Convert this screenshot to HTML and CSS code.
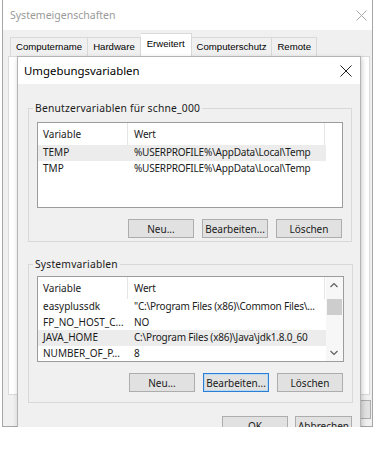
FILE: index.html
```html
<!DOCTYPE html>
<html lang="de">
<head>
  <meta charset="UTF-8">
  <title>Systemeigenschaften</title>
  <link rel="stylesheet" href="styles.css">
</head>
<body>
<div class="sys">
  <div class="sys-title">
    <span>Systemeigenschaften</span>
    <svg class="sys-close" width="11" height="11" viewBox="0 0 11 11"><path d="M0.5 0.5 L10.5 10.5 M10.5 0.5 L0.5 10.5" stroke="#a8a8a8" stroke-width="1" fill="none"/></svg>
  </div>
  <div class="tabs">
    <div class="tab">Computername</div>
    <div class="tab">Hardware</div>
    <div class="tab tab-active">Erweitert</div>
    <div class="tab">Computerschutz</div>
    <div class="tab">Remote</div>
  </div>
  <div class="page"></div>
  <div class="sys-footer">
    <button class="btn btn-apply">Übernehmen</button>
  </div>

  <div class="dialog">
    <div class="dialog-title">
      <span>Umgebungsvariablen</span>
      <svg class="dialog-close" width="12" height="12" viewBox="0 0 12 12"><path d="M0.5 0.5 L11.5 11.5 M11.5 0.5 L0.5 11.5" stroke="#222" stroke-width="1" fill="none"/></svg>
    </div>
    <div class="dialog-body">
      <fieldset class="group group-user">
        <legend>Benutzervariablen für schne_000</legend>
        <div class="list">
          <div class="list-main">
            <div class="list-head">
              <div class="col">Variable</div>
              <div class="col">Wert</div>
            </div>
            <div class="row row-sel"><div class="col">TEMP</div><div class="col">%USERPROFILE%\AppData\Local\Temp</div></div>
            <div class="row"><div class="col">TMP</div><div class="col">%USERPROFILE%\AppData\Local\Temp</div></div>
          </div>
        </div>
        <div class="btn-row">
          <button class="btn">Neu...</button>
          <button class="btn">Bearbeiten...</button>
          <button class="btn">Löschen</button>
        </div>
      </fieldset>

      <fieldset class="group group-sys">
        <legend>Systemvariablen</legend>
        <div class="list">
          <div class="list-main">
            <div class="list-head">
              <div class="col">Variable</div>
              <div class="col">Wert</div>
            </div>
            <div class="row"><div class="col">easyplussdk</div><div class="col">"C:\Program Files (x86)\Common Files\...</div></div>
            <div class="row"><div class="col">FP_NO_HOST_C...</div><div class="col">NO</div></div>
            <div class="row row-sel"><div class="col">JAVA_HOME</div><div class="col">C:\Program Files (x86)\Java\jdk1.8.0_60</div></div>
            <div class="row"><div class="col">NUMBER_OF_P...</div><div class="col">8</div></div>
          </div>
          <div class="scrollbar">
            <svg class="arrow" width="16" height="17" viewBox="0 0 16 17"><path d="M4.5 10 L8 6.5 L11.5 10" stroke="#606060" stroke-width="1.2" fill="none"/></svg>
            <div class="track"><div class="thumb"></div></div>
            <svg class="arrow" width="16" height="17" viewBox="0 0 16 17"><path d="M4.5 7 L8 10.5 L11.5 7" stroke="#606060" stroke-width="1.2" fill="none"/></svg>
          </div>
        </div>
        <div class="btn-row">
          <button class="btn">Neu...</button>
          <button class="btn btn-focus">Bearbeiten...</button>
          <button class="btn">Löschen</button>
        </div>
      </fieldset>

      <div class="dialog-footer">
        <button class="btn">OK</button>
        <button class="btn">Abbrechen</button>
      </div>
    </div>
  </div>
</div>
</body>
</html>
```

FILE: styles.css
```css
* {
  margin: 0;
  padding: 0;
  box-sizing: border-box;
}

body {
  background: #fff;
  font-family: "Noto Sans", sans-serif;
  font-size: 10px;
  color: #1a1a1a;
}

.sys {
  position: relative;
  width: 371px;
  height: 427px;
  margin-left: 2px;
  border: 1px solid #a6a6a6;
  border-top: 0;
  background: #f0f0f0;
}

.sys-title {
  height: 30px;
  background: #fff;
  display: flex;
  align-items: center;
  justify-content: space-between;
  padding: 0 5px 0 7px;
  font-size: 10.5px;
  color: #9a9a9a;
}

.tabs {
  display: flex;
  align-items: flex-end;
  height: 26px;
  padding-left: 7px;
  position: relative;
  z-index: 1;
}

.tab {
  height: 19px;
  padding: 0 5px;
  border: 1px solid #d9d9d9;
  border-bottom: 0;
  border-left: 0;
  background: #f0f0f0;
  font-family: "Liberation Sans", Arial, sans-serif;
  font-size: 9.6px;
  line-height: 18px;
  color: #000;
}

.tab:first-child {
  border-left: 1px solid #d9d9d9;
}

.tab-active {
  height: 24px;
  background: #fff;
  margin-bottom: -1px;
  line-height: 20px;
  padding: 0 6px;
}

.page {
  height: 339px;
  margin: 0 2px 0 5px;
  border: 1px solid #d9d9d9;
  background: #fff;
}

.sys-footer {
  display: flex;
  justify-content: flex-end;
  padding: 5px 1px 0 0;
}

.dialog {
  position: absolute;
  left: 14px;
  top: 56px;
  width: 344px;
  height: 392px;
  border: 1px solid #b4b4b4;
  background: #f0f0f0;
  box-shadow: 1px 2px 5px rgba(0, 0, 0, 0.22);
  z-index: 2;
}

.dialog-title {
  height: 27px;
  background: #fff;
  display: flex;
  align-items: center;
  justify-content: space-between;
  padding: 0 8px 0 6px;
  font-size: 11.4px;
  color: #000;
}

.dialog-body {
  padding: 0 8px 0 10px;
}

.group {
  border: 1px solid #d8d8d8;
  padding: 0 8px 3px;
}

.group legend {
  margin-left: -4px;
  padding: 0 2px;
  line-height: 14px;
  font-size: 10.3px;
  letter-spacing: 0.2px;
}

.group-user {
  margin-top: 17px;
}

.group-user .list {
  margin-top: 7px;
}

.group-sys {
  margin-top: 15px;
  padding-bottom: 10px;
}

.group-sys .list {
  margin-top: 5px;
}

.list {
  display: flex;
  height: 86px;
  border: 1px solid #9c9c9c;
  background: #fff;
}

.list-main {
  width: 288px;
  overflow: hidden;
}

.list-head,
.row {
  display: grid;
  grid-template-columns: 90px 197px;
}

.list-head {
  height: 22px;
  align-items: center;
}

.list-head .col {
  height: 22px;
  line-height: 22px;
  border-right: 1px solid #e5e5e5;
}

.row {
  height: 15.5px;
  line-height: 15.5px;
}

.row-sel {
  background: #ececec;
}

.col {
  padding-left: 5px;
  white-space: nowrap;
  overflow: hidden;
}

.col + .col {
  padding-left: 6px;
  letter-spacing: -0.2px;
}

.scrollbar {
  margin-left: auto;
  width: 17px;
  display: flex;
  flex-direction: column;
  background: #f7f7f7;
}

.arrow {
  display: block;
  flex: none;
}

.track {
  flex: 1;
  padding-top: 5px;
}

.thumb {
  height: 16px;
  margin: 0 1px;
  background: #cdcdcd;
}

.btn-row {
  display: flex;
  justify-content: flex-end;
  gap: 8px;
  margin-top: 11px;
  padding-right: 1px;
}

.btn {
  width: 66px;
  height: 19px;
  padding: 0;
  border: 1px solid #adadad;
  background: #e1e1e1;
  font-family: "Noto Sans", sans-serif;
  font-size: 10px;
  color: #1a1a1a;
}

.btn-apply {
  width: 92px;
}

.btn-focus {
  border-color: #2a7fd4;
  box-shadow: inset 0 0 0 1px #bcd9f3;
}

.dialog-footer {
  display: flex;
  justify-content: flex-end;
  gap: 7px;
  margin-top: 13px;
}

.dialog-footer .btn:last-child {
  width: 57px;
}
```
